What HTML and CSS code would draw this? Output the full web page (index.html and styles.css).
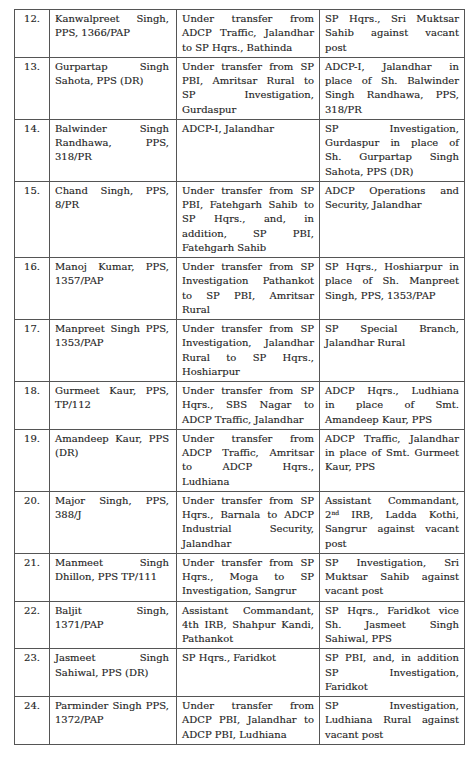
FILE: index.html
```html
<!DOCTYPE html>
<html>
<head>
<meta charset="utf-8">
<link rel="stylesheet" href="styles.css">
</head>
<body>
<table class="list">
<colgroup><col class="c-no"><col class="c-name"><col class="c-from"><col class="c-to"></colgroup>
<tbody>
<tr class="r12">
<td class="no">12.</td>
<td><span class="l">Kanwalpreet Singh,</span><span class="e">PPS, 1366/PAP</span></td>
<td><span class="l">Under transfer from</span><span class="l">ADCP Traffic, Jalandhar</span><span class="e">to SP Hqrs., Bathinda</span></td>
<td><span class="l">SP Hqrs., Sri Muktsar</span><span class="l">Sahib against vacant</span><span class="e">post</span></td>
</tr>
<tr>
<td class="no">13.</td>
<td><span class="l">Gurpartap Singh</span><span class="e">Sahota, PPS (DR)</span></td>
<td><span class="l">Under transfer from SP</span><span class="l">PBI, Amritsar Rural to</span><span class="l">SP Investigation,</span><span class="e">Gurdaspur</span></td>
<td><span class="l">ADCP-I, Jalandhar in</span><span class="l">place of Sh. Balwinder</span><span class="l">Singh Randhawa, PPS,</span><span class="e">318/PR</span></td>
</tr>
<tr>
<td class="no">14.</td>
<td><span class="l">Balwinder Singh</span><span class="l">Randhawa, PPS,</span><span class="e">318/PR</span></td>
<td><span class="e">ADCP-I, Jalandhar</span></td>
<td><span class="l">SP Investigation,</span><span class="l">Gurdaspur in place of</span><span class="l">Sh. Gurpartap Singh</span><span class="e">Sahota, PPS (DR)</span></td>
</tr>
<tr>
<td class="no">15.</td>
<td><span class="l">Chand Singh, PPS,</span><span class="e">8/PR</span></td>
<td><span class="l">Under transfer from SP</span><span class="l">PBI, Fatehgarh Sahib to</span><span class="l">SP Hqrs., and, in</span><span class="l">addition, SP PBI,</span><span class="e">Fatehgarh Sahib</span></td>
<td><span class="l">ADCP Operations and</span><span class="e">Security, Jalandhar</span></td>
</tr>
<tr>
<td class="no">16.</td>
<td><span class="l">Manoj Kumar, PPS,</span><span class="e">1357/PAP</span></td>
<td><span class="l">Under transfer from SP</span><span class="l">Investigation Pathankot</span><span class="l">to SP PBI, Amritsar</span><span class="e">Rural</span></td>
<td><span class="l">SP Hqrs., Hoshiarpur in</span><span class="l">place of Sh. Manpreet</span><span class="e">Singh, PPS, 1353/PAP</span></td>
</tr>
<tr>
<td class="no">17.</td>
<td><span class="l">Manpreet Singh PPS,</span><span class="e">1353/PAP</span></td>
<td><span class="l">Under transfer from SP</span><span class="l">Investigation, Jalandhar</span><span class="l">Rural to SP Hqrs.,</span><span class="e">Hoshiarpur</span></td>
<td><span class="l">SP Special Branch,</span><span class="e">Jalandhar Rural</span></td>
</tr>
<tr>
<td class="no">18.</td>
<td><span class="l">Gurmeet Kaur, PPS,</span><span class="e">TP/112</span></td>
<td><span class="l">Under transfer from SP</span><span class="l">Hqrs., SBS Nagar to</span><span class="e">ADCP Traffic, Jalandhar</span></td>
<td><span class="l">ADCP Hqrs., Ludhiana</span><span class="l">in place of Smt.</span><span class="e">Amandeep Kaur, PPS</span></td>
</tr>
<tr>
<td class="no">19.</td>
<td><span class="l">Amandeep Kaur, PPS</span><span class="e">(DR)</span></td>
<td><span class="l">Under transfer from</span><span class="l">ADCP Traffic, Amritsar</span><span class="l">to ADCP Hqrs.,</span><span class="e">Ludhiana</span></td>
<td><span class="l">ADCP Traffic, Jalandhar</span><span class="l">in place of Smt. Gurmeet</span><span class="e">Kaur, PPS</span></td>
</tr>
<tr>
<td class="no">20.</td>
<td><span class="l">Major Singh, PPS,</span><span class="e">388/J</span></td>
<td><span class="l">Under transfer from SP</span><span class="l">Hqrs., Barnala to ADCP</span><span class="l">Industrial Security,</span><span class="e">Jalandhar</span></td>
<td><span class="l">Assistant Commandant,</span><span class="l">2<sup>nd</sup> IRB, Ladda Kothi,</span><span class="l">Sangrur against vacant</span><span class="e">post</span></td>
</tr>
<tr>
<td class="no">21.</td>
<td><span class="l">Manmeet Singh</span><span class="e">Dhillon, PPS TP/111</span></td>
<td><span class="l">Under transfer from SP</span><span class="l">Hqrs., Moga to SP</span><span class="e">Investigation, Sangrur</span></td>
<td><span class="l">SP Investigation, Sri</span><span class="l">Muktsar Sahib against</span><span class="e">vacant post</span></td>
</tr>
<tr>
<td class="no">22.</td>
<td><span class="l">Baljit Singh,</span><span class="e">1371/PAP</span></td>
<td><span class="l">Assistant Commandant,</span><span class="l">4th IRB, Shahpur Kandi,</span><span class="e">Pathankot</span></td>
<td><span class="l">SP Hqrs., Faridkot vice</span><span class="l">Sh. Jasmeet Singh</span><span class="e">Sahiwal, PPS</span></td>
</tr>
<tr>
<td class="no">23.</td>
<td><span class="l">Jasmeet Singh</span><span class="e">Sahiwal, PPS (DR)</span></td>
<td><span class="e">SP Hqrs., Faridkot</span></td>
<td><span class="l">SP PBI, and, in addition</span><span class="l">SP Investigation,</span><span class="e">Faridkot</span></td>
</tr>
<tr>
<td class="no">24.</td>
<td><span class="l">Parminder Singh PPS,</span><span class="e">1372/PAP</span></td>
<td><span class="l">Under transfer from</span><span class="l">ADCP PBI, Jalandhar to</span><span class="e">ADCP PBI, Ludhiana</span></td>
<td><span class="l">SP Investigation,</span><span class="l">Ludhiana Rural against</span><span class="e">vacant post</span></td>
</tr>
</tbody>
</table>
</body>
</html>
```
FILE: styles.css
```css
html, body {
  margin: 0;
  padding: 0;
  background: #ffffff;
}
body {
  padding: 9px 0 0 14px;
  font-family: "DejaVu Serif", "Liberation Serif", serif;
  font-size: 10px;
  line-height: 14.25px;
  color: #1f1f1f;
  -webkit-text-stroke: 0.15px #1f1f1f;
}
.list {
  border-collapse: collapse;
  table-layout: fixed;
  width: 450px;
}
.c-no { width: 35px; }
.c-name { width: 127px; }
.c-from { width: 143px; }
.c-to { width: 145px; }
.list td {
  border: 1px solid #555555;
  vertical-align: top;
  padding: 2px 5px 2px 5px;
  white-space: nowrap;
  overflow: hidden;
}
.list td:nth-child(2) {
  padding-right: 7px;
}
.list td.no {
  text-align: center;
  padding: 2px 0;
}
.l {
  display: block;
  text-align: justify;
  text-align-last: justify;
  white-space: normal;
}
.e {
  display: block;
  text-align: left;
}
sup {
  font-size: 6px;
  line-height: 0;
  vertical-align: 3px;
}
```
